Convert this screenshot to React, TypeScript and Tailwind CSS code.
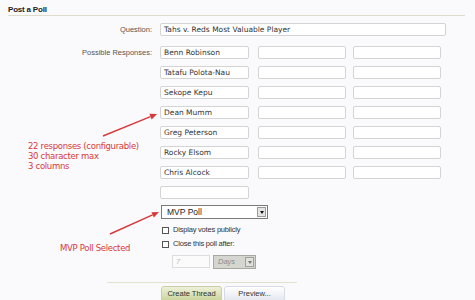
import React from "react";

const col1 = ["Benn Robinson", "Tatafu Polota-Nau", "Sekope Kepu", "Dean Mumm", "Greg Peterson", "Rocky Elsom", "Chris Alcock", ""];
const blank7 = ["", "", "", "", "", "", ""];

function Field({ value, w }: { value: string; w: string }) {
  return (
    <div
      className={`${w} h-[13px] bg-white border border-[#d4d4d4] rounded-[2px] px-[3px] flex items-center text-[7.5px] text-[#333] leading-none whitespace-nowrap overflow-hidden`}
      style={{ fontFamily: '"DejaVu Sans", Verdana, sans-serif' }}
    >
      {value}
    </div>
  );
}

function Arrow({ x1, y1, x2, y2 }: { x1: number; y1: number; x2: number; y2: number }) {
  const a = Math.atan2(y2 - y1, x2 - x1);
  const L = 7, W = 3;
  const bx = x2 - L * Math.cos(a), by = y2 - L * Math.sin(a);
  const px = -Math.sin(a) * W, py = Math.cos(a) * W;
  return (
    <g>
      <line x1={x1} y1={y1} x2={bx} y2={by} stroke="#d9383a" strokeWidth="1.4" />
      <polygon points={`${x2},${y2} ${bx + px},${by + py} ${bx - px},${by - py}`} fill="#d9383a" />
    </g>
  );
}

export default function App() {
  return (
    <div className="relative w-[475px] h-[300px] overflow-hidden bg-[#fafafc]" style={{ fontFamily: '"Liberation Sans", Arial, sans-serif' }}>
      <div className="ml-[8px] w-[457px] h-[16px] pt-[5px] border-b border-[#dddccb] text-[8px] font-bold text-[#222] leading-[9px] tracking-[-0.2px]">
        Post a Poll
      </div>

      <div className="mt-[7px] flex items-center h-[13px]">
        <div className="w-[152px] text-right text-[7.5px] text-[#555] leading-none">Question:</div>
        <div className="ml-[8px]">
          <Field value="Tahs v. Reds Most Valuable Player" w="w-[286px]" />
        </div>
      </div>

      <div className="mt-[10px] flex">
        <div className="w-[152px] text-right text-[7.5px] text-[#555] leading-none pt-[3px]">Possible Responses:</div>
        <div className="ml-[8px] flex">
          <div className="flex flex-col gap-[7px]">
            {col1.map((v, i) => (
              <Field key={i} value={v} w="w-[89px]" />
            ))}
          </div>
          <div className="ml-[9px] flex flex-col gap-[7px]">
            {blank7.map((v, i) => (
              <Field key={i} value={v} w="w-[88px]" />
            ))}
          </div>
          <div className="ml-[7px] flex flex-col gap-[7px]">
            {blank7.map((v, i) => (
              <Field key={i} value={v} w="w-[88px]" />
            ))}
          </div>
        </div>
      </div>

      <div className="mt-[6px] ml-[161px] w-[107px] h-[14px] bg-white border border-[#7a7a7a] flex items-center justify-between pl-[5px] pr-[1px]">
        <span className="text-[8.5px] text-[#222] leading-none">MVP Poll</span>
        <span className="w-[9px] h-[10px] bg-[#e4e4e4] border border-[#9a9a9a] flex items-center justify-center">
          <span className="w-0 h-0 border-l-[2.5px] border-r-[2.5px] border-t-[3px] border-l-transparent border-r-transparent border-t-[#111]" />
        </span>
      </div>

      <div className="mt-[6px] ml-[162px] h-[10px] flex items-center gap-[4px]">
        <span className="w-[7px] h-[7px] bg-white border border-[#555]" />
        <span className="text-[7.5px] text-[#333] leading-none tracking-[-0.2px]">Display votes publicly</span>
      </div>
      <div className="mt-[4px] ml-[162px] h-[10px] flex items-center gap-[4px]">
        <span className="w-[7px] h-[7px] bg-white border border-[#555]" />
        <span className="text-[7.5px] text-[#333] leading-none tracking-[-0.2px]">Close this poll after:</span>
      </div>

      <div className="mt-[6px] ml-[172px] flex gap-[3px]">
        <div className="w-[38px] h-[13px] bg-[#fbfbfb] border border-[#dcdcdc] pl-[3px] flex items-center text-[7.5px] italic text-[#bbb] leading-none">7</div>
        <div className="w-[43px] h-[14px] bg-[#d6d6d0] border border-[#a8a8a0] flex items-center justify-between pl-[4px] pr-[1px]">
          <span className="text-[7.5px] italic text-[#8a8a8a] leading-none">Days</span>
          <span className="w-[9px] h-[10px] bg-[#e0e0dc] border border-[#a0a0a0] flex items-center justify-center">
            <span className="w-0 h-0 border-l-[2.5px] border-r-[2.5px] border-t-[3px] border-l-transparent border-r-transparent border-t-[#777]" />
          </span>
        </div>
      </div>

      <div className="mt-[13px] ml-[107px] w-[190px] border-t border-[#e2e2cc]" />

      <div className="mt-[3px] ml-[161px] flex gap-[2px]">
        <div className="w-[61px] h-[16px] rounded-[3px] border border-[#c8cfa8] bg-gradient-to-b from-[#eef1d8] to-[#c9d29a] flex items-center justify-center text-[7.5px] text-[#333] leading-none">
          Create Thread
        </div>
        <div className="w-[61px] h-[16px] rounded-[3px] border border-[#d8dae4] bg-gradient-to-b from-[#ffffff] to-[#e4e6ef] flex items-center justify-center text-[7.5px] text-[#333] leading-none">
          Preview...
        </div>
      </div>

      <svg className="absolute left-0 top-0" width="475" height="300">
        <Arrow x1={103} y1={136} x2={157} y2={114} />
        <Arrow x1={110} y1={234} x2={159} y2={212} />
      </svg>

      <div className="absolute left-[28px] top-[141px] text-[8.5px] leading-[10px] text-[#d9383a]" style={{ fontFamily: '"DejaVu Sans", Verdana, sans-serif' }}>
        <div className="tracking-[-0.3px]">22 responses (configurable)</div>
        <div className="tracking-[-0.3px]">30 character max</div>
        <div className="tracking-[-0.3px]">3 columns</div>
      </div>
      <div className="absolute left-[60px] top-[243px] text-[8.5px] leading-[10px] text-[#d9383a] tracking-[-0.3px]" style={{ fontFamily: '"DejaVu Sans", Verdana, sans-serif' }}>
        MVP Poll Selected
      </div>
    </div>
  );
}
